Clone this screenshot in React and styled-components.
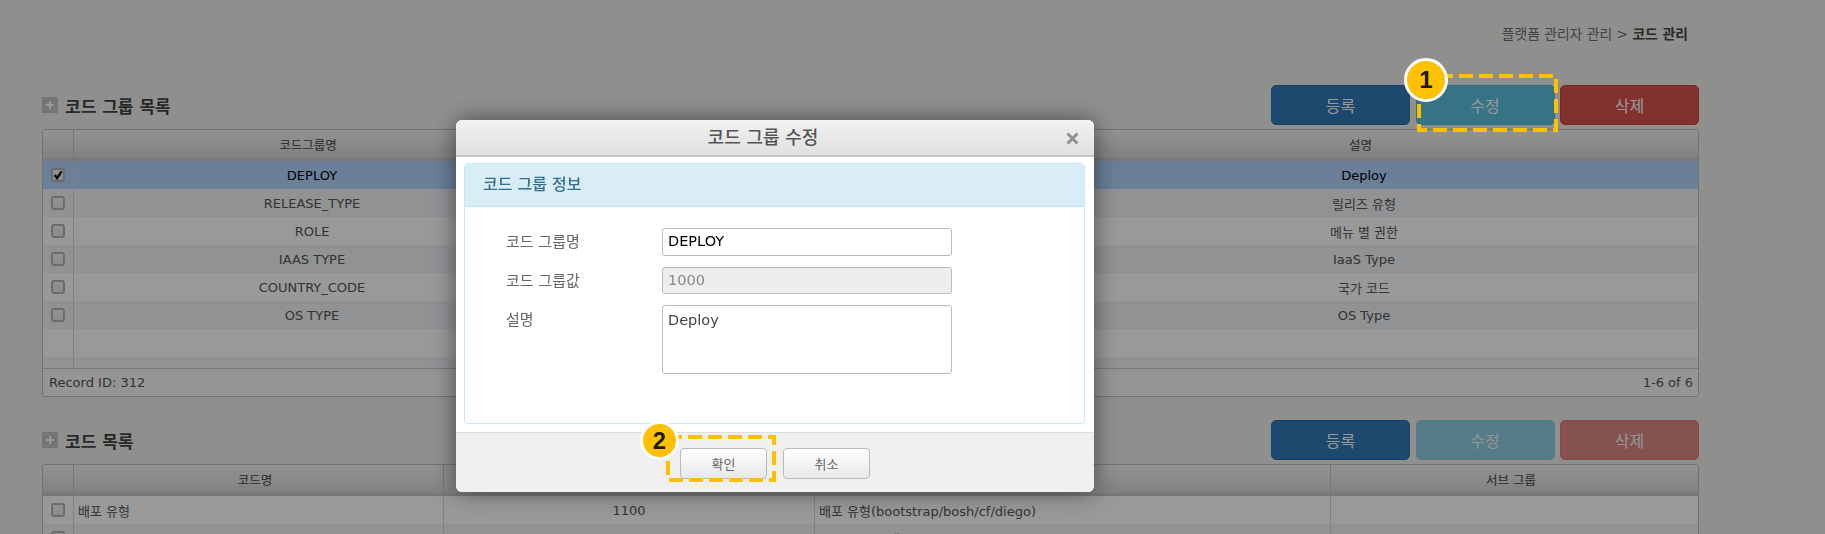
import React from 'react'
import styled, { createGlobalStyle } from 'styled-components'

const FONT = `"DejaVu Sans", "Noto Sans CJK KR", sans-serif`

const GlobalStyle = createGlobalStyle`
    html, body {
        margin: 0;
        height: 100%;
        overflow: hidden;
        background: #eef0ed;
    }
    body {
        font-family: ${FONT};
        font-size: 13px;
        color: #555;
    }
    * {
        box-sizing: border-box;
    }
`

const groupRows = [
    ['DEPLOY', 'Deploy', true],
    ['RELEASE_TYPE', '릴리즈 유형'],
    ['ROLE', '메뉴 별 권한'],
    ['IAAS TYPE', 'IaaS Type'],
    ['COUNTRY_CODE', '국가 코드'],
    ['OS TYPE', 'OS Type'],
]

const GROUP_COLS = '31px 476px 480px 1fr'
const CODE_COLS = '31px 370px 371px 516px 1fr'

const Page = styled.div`
    width: 1825px;
    height: 534px;
    padding: 0 126px 0 42px;
    overflow: hidden;
`

const Breadcrumb = styled.div`
    height: 85px;
    padding: 24px 11px 0 0;
    line-height: 20px;
    text-align: right;
    font-size: 13.8px;
    color: #6e6e6e;
    b {
        color: #444;
    }
`

const SectionHead = styled.div`
    display: flex;
    align-items: center;
    justify-content: space-between;
    height: 40px;
    margin-bottom: 4px;
`

const SectionTitle = styled.h2`
    display: flex;
    align-items: center;
    gap: 7px;
    margin: 0;
    font-size: 17px;
    font-weight: 700;
    color: #444;
`

const PlusIcon = styled.span`
    position: relative;
    display: block;
    width: 16px;
    height: 16px;
    background: #c4c4c4;
    &::before, &::after {
        content: '';
        position: absolute;
        background: #fff;
    }
    &::before {
        left: 4px;
        top: 7px;
        width: 8px;
        height: 2px;
    }
    &::after {
        left: 7px;
        top: 4px;
        width: 2px;
        height: 8px;
    }
`

const ButtonGroup = styled.div`
    display: flex;
    gap: 5.5px;
`

const ActionButton = styled.button`
    width: 139px;
    height: 40px;
    border: 1px solid ${p => p.$edge};
    border-radius: 5px;
    background: ${p => p.$bg};
    color: #fff;
    font-family: inherit;
    font-size: 16px;
    opacity: ${p => (p.$dim ? 0.65 : 1)};
`

const Grid = styled.div`
    border: 1px solid #bcbcbc;
    border-radius: 3px;
    overflow: hidden;
    margin-bottom: 23px;
`

const HeaderRow = styled.div`
    display: grid;
    grid-template-columns: ${p => p.$cols};
    height: 31px;
    border-bottom: 3px solid #c8c8c8;
    background: linear-gradient(#f4f4f4, #d6d6d6);
`

const HeaderCell = styled.div`
    display: flex;
    align-items: center;
    justify-content: center;
    padding-right: 7px;
    border-right: 1px solid #c4c4c4;
    color: #444;
    font-size: 12.5px;
    &:last-child {
        border-right: none;
    }
`

const Row = styled.div`
    display: grid;
    grid-template-columns: ${p => p.$cols};
    height: ${p => p.$height || 28}px;
    background: ${p => (p.$selected ? '#b2d4ff' : p.$stripe ? '#f1f3f7' : '#fff')};
    color: ${p => (p.$selected ? '#000' : '#555')};
`

const Cell = styled.div`
    display: flex;
    align-items: center;
    justify-content: ${p => (p.$left ? 'flex-start' : 'center')};
    padding: 0 ${p => (p.$left ? 4 : 0)}px;
    font-size: 13px;
    white-space: nowrap;
    border-right: ${p => (p.$line ? '1px solid #d8d8d8' : 'none')};
`

const Checkbox = styled.span`
    display: flex;
    align-items: center;
    justify-content: center;
    width: 14px;
    height: 14px;
    border: 2px solid #b4b4b4;
    border-radius: 3px;
    background: linear-gradient(#f4f4f4, #e6e6e6);
    svg {
        display: block;
        flex: none;
    }
`

const Footer = styled.div`
    display: flex;
    align-items: center;
    justify-content: space-between;
    height: 28px;
    padding: 0 5px 0 6px;
    border-top: 1px solid #c8c8c8;
    background: #f8f8f8;
    font-size: 13px;
`

const Overlay = styled.div`
    position: fixed;
    inset: 0;
    background: rgba(0, 0, 0, 0.4);
`

const Modal = styled.div`
    position: fixed;
    left: 456px;
    top: 120px;
    width: 638px;
    height: 372px;
    display: flex;
    flex-direction: column;
    border-radius: 6px;
    background: #fff;
    box-shadow: 0 0 25px rgba(0, 0, 0, 0.5);
    overflow: hidden;
`

const ModalTitle = styled.div`
    position: relative;
    flex: none;
    height: 37px;
    padding-right: 24px;
    border-bottom: 2px solid #c4c4c4;
    background: linear-gradient(#f2f2f2, #e0e0e0);
    line-height: 36px;
    text-align: center;
    font-size: 18px;
    font-weight: 500;
    color: #555;
`

const CloseMark = styled.span`
    position: absolute;
    right: 15px;
    top: 12px;
    display: block;
    line-height: 0;
    color: #8b939a;
`

const ModalBody = styled.div`
    flex: 1;
    padding: 6px 9px 8px 8px;
`

const Panel = styled.div`
    height: 100%;
    border: 1px solid #c6e9f2;
    border-radius: 4px;
    overflow: hidden;
`

const PanelHead = styled.div`
    height: 43px;
    padding-left: 18px;
    border-bottom: 1px solid #bce8f1;
    background: #d9edf7;
    line-height: 42px;
    font-size: 16px;
    font-weight: 500;
    color: #31708f;
`

const Form = styled.div`
    display: grid;
    grid-template-columns: 156px 290px;
    row-gap: 11px;
    padding: 21px 0 0 41px;
`

const Label = styled.label`
    padding-top: ${p => p.$top || 3}px;
    line-height: 22px;
    font-size: 15px;
    color: #666;
`

const TextInput = styled.div`
    height: ${p => p.$height || 27.5}px;
    padding: ${p => p.$top || 0}px 5px 0;
    border: 1px solid #bbb;
    border-radius: 3px;
    background: ${p => (p.$off ? '#eee' : '#fff')};
    line-height: 25px;
    font-size: 14.5px;
    color: ${p => (p.$off ? '#888' : p.$dark ? '#000' : '#444')};
`

const ModalFooter = styled.div`
    flex: none;
    display: flex;
    justify-content: center;
    gap: 16px;
    height: 60px;
    padding: 15px 0 0 0;
    border-top: 1px solid #ddd;
    background: #f0f0f0;
`

const PlainButton = styled.button`
    width: 87px;
    height: 31px;
    border: 1px solid #bbb;
    border-radius: 4px;
    background: linear-gradient(#fff, #e8e8e8);
    color: #666;
    font-family: inherit;
    font-size: 13px;
`

const Highlight = styled.div`
    position: fixed;
    left: ${p => p.$x}px;
    top: ${p => p.$y}px;
    width: ${p => p.$w}px;
    height: ${p => p.$h}px;
`

const Badge = styled.div`
    position: fixed;
    left: ${p => p.$x}px;
    top: ${p => p.$y}px;
    width: ${p => p.$size}px;
    height: ${p => p.$size}px;
    display: flex;
    align-items: center;
    justify-content: center;
    border: 3px solid #fff;
    border-radius: 50%;
    background: #ffc000;
    color: #1a1a1a;
    font-family: "Liberation Sans", sans-serif;
    font-size: 24px;
    font-weight: 700;
`

function DashBox({ x, y, w, h }) {
    return (
        <Highlight $x={x} $y={y} $w={w} $h={h}>
            <svg width={w} height={h}>
                <rect x="2" y="2" width={w - 4} height={h - 4} fill="none" stroke="#ffc000" strokeWidth="4" strokeDasharray="14 6" />
            </svg>
        </Highlight>
    )
}

function Actions({ dim }) {
    return (
        <ButtonGroup>
            <ActionButton $bg="#337ab7" $edge="#2e6da4">등록</ActionButton>
            <ActionButton $bg="#5bc0de" $edge="#46b8da" $dim={dim}>수정</ActionButton>
            <ActionButton $bg="#d9534f" $edge="#d43f3a" $dim={dim}>삭제</ActionButton>
        </ButtonGroup>
    )
}

function Check({ on }) {
    return (
        <Checkbox>
            {on && (
                <svg width="10" height="10" viewBox="0 0 11 11">
                    <path d="M2 5.5 L4.5 9 L9.5 1.5" fill="none" stroke="#000" strokeWidth="2.4" />
                </svg>
            )}
        </Checkbox>
    )
}

export default function App() {
    return (
        <>
            <GlobalStyle />
            <Page>
                <Breadcrumb>플랫폼 관리자 관리 &gt; <b>코드 관리</b></Breadcrumb>

                <SectionHead>
                    <SectionTitle><PlusIcon />코드 그룹 목록</SectionTitle>
                    <Actions />
                </SectionHead>
                <Grid>
                    <HeaderRow $cols={GROUP_COLS}>
                        <HeaderCell />
                        <HeaderCell>코드그룹명</HeaderCell>
                        <HeaderCell>코드그룹값</HeaderCell>
                        <HeaderCell>설명</HeaderCell>
                    </HeaderRow>
                    {groupRows.map(([name, desc, selected], i) => (
                        <Row key={name} $cols={GROUP_COLS} $selected={selected} $stripe={i % 2 === 1}>
                            <Cell $line><Check on={selected} /></Cell>
                            <Cell>{name}</Cell>
                            <Cell>{1000 + i * 100}</Cell>
                            <Cell>{desc}</Cell>
                        </Row>
                    ))}
                    <Row $cols={GROUP_COLS}><Cell $line /></Row>
                    <Row $cols={GROUP_COLS} $stripe $height={11}><Cell $line /></Row>
                    <Footer>
                        <span>Record ID: 312</span>
                        <span>1-6 of 6</span>
                    </Footer>
                </Grid>

                <SectionHead>
                    <SectionTitle><PlusIcon />코드 목록</SectionTitle>
                    <Actions dim />
                </SectionHead>
                <Grid>
                    <HeaderRow $cols={CODE_COLS}>
                        <HeaderCell />
                        <HeaderCell>코드명</HeaderCell>
                        <HeaderCell>코드값</HeaderCell>
                        <HeaderCell>설명</HeaderCell>
                        <HeaderCell>서브 그룹</HeaderCell>
                    </HeaderRow>
                    <Row $cols={CODE_COLS}>
                        <Cell $line><Check /></Cell>
                        <Cell $line $left>배포 유형</Cell>
                        <Cell $line>1100</Cell>
                        <Cell $line $left>배포 유형(bootstrap/bosh/cf/diego)</Cell>
                        <Cell />
                    </Row>
                    <Row $cols={CODE_COLS} $stripe>
                        <Cell $line><Check /></Cell>
                        <Cell $line $left>BOOTSTRAP</Cell>
                        <Cell $line>1101</Cell>
                        <Cell $line $left>BootStrap 배포</Cell>
                        <Cell>1100</Cell>
                    </Row>
                </Grid>
            </Page>

            <Overlay />

            <Modal>
                <ModalTitle>
                    코드 그룹 수정
                    <CloseMark>
                        <svg width="13" height="13" viewBox="0 0 13 13">
                            <path d="M1.5 1.5 L11.5 11.5 M11.5 1.5 L1.5 11.5" stroke="currentColor" strokeWidth="3" />
                        </svg>
                    </CloseMark>
                </ModalTitle>
                <ModalBody>
                    <Panel>
                        <PanelHead>코드 그룹 정보</PanelHead>
                        <Form>
                            <Label>코드 그룹명</Label>
                            <TextInput $dark>DEPLOY</TextInput>
                            <Label>코드 그룹값</Label>
                            <TextInput $off>1000</TextInput>
                            <Label $top={4}>설명</Label>
                            <TextInput $height={69} $top={2}>Deploy</TextInput>
                        </Form>
                    </Panel>
                </ModalBody>
                <ModalFooter>
                    <PlainButton>확인</PlainButton>
                    <PlainButton>취소</PlainButton>
                </ModalFooter>
            </Modal>

            <DashBox x={1417} y={74} w={141} h={58} />
            <Badge $x={1404} $y={58} $size={44}>1</Badge>
            <DashBox x={666} y={435} w={110} h={47} />
            <Badge $x={640} $y={421} $size={39}>2</Badge>
        </>
    )
}
